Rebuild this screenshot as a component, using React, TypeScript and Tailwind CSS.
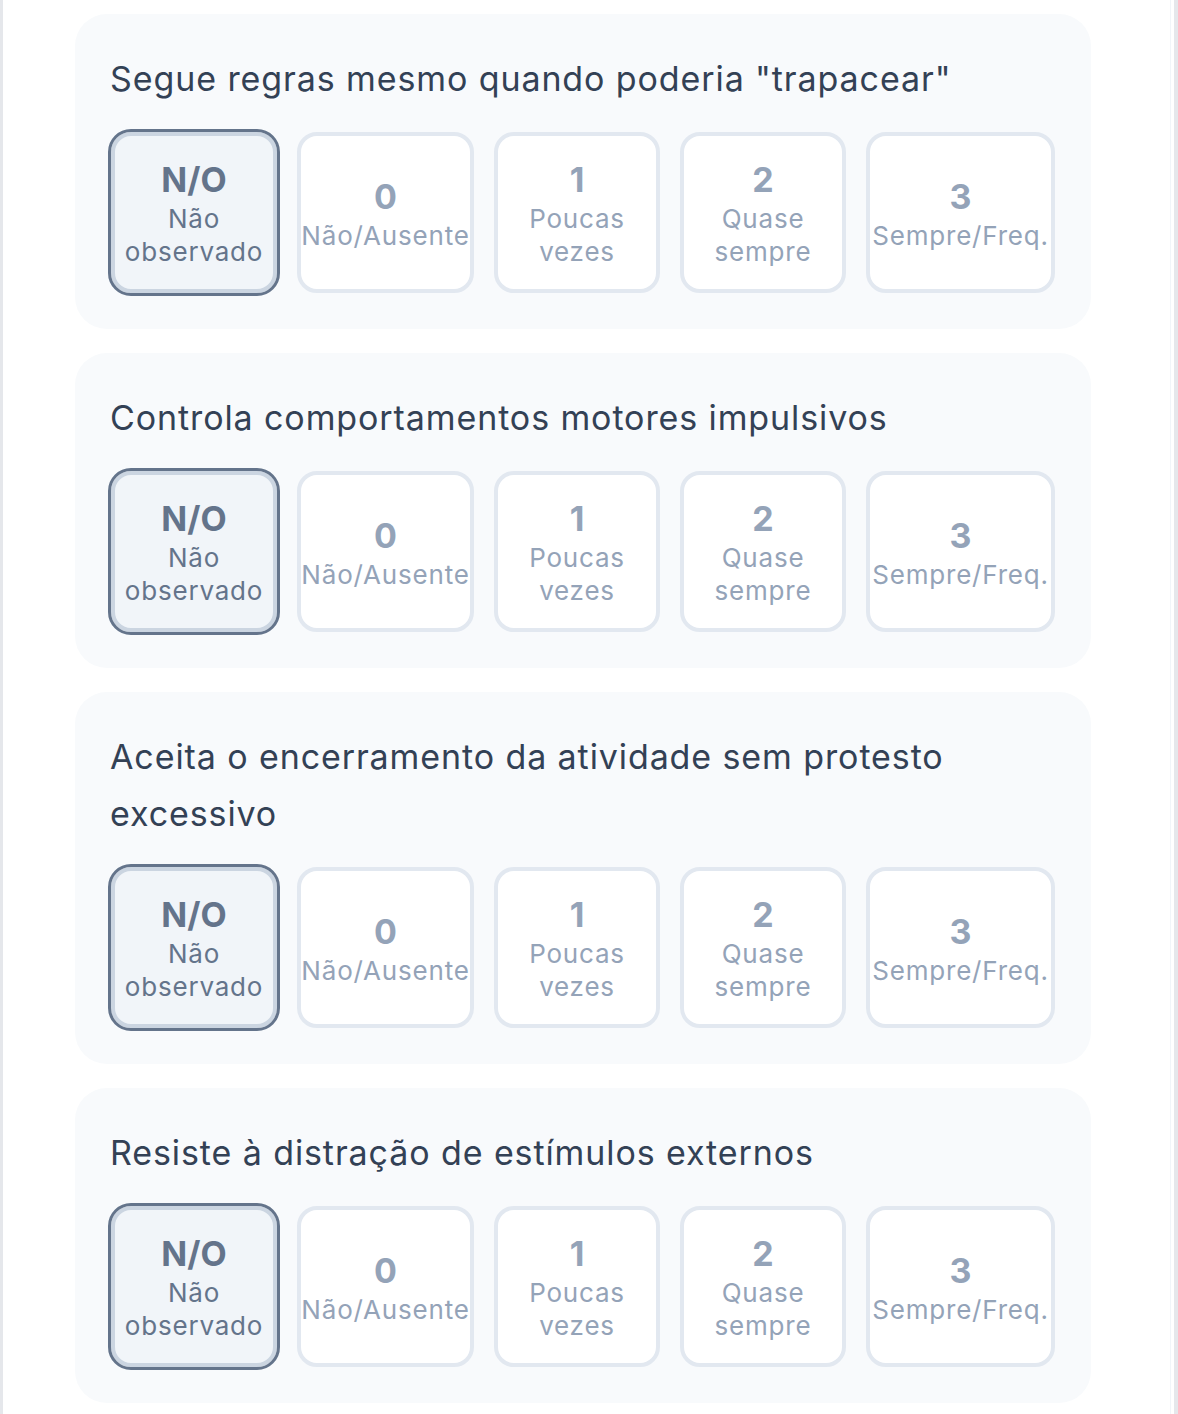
import React from "react";

type Opt = { n: string; label: string[]; w: string };

const options: Opt[] = [
  { n: "N/O", label: ["Não", "observado"], w: "w-[166px]" },
  { n: "0", label: ["Não/Ausente"], w: "w-[177px]" },
  { n: "1", label: ["Poucas", "vezes"], w: "w-[166px]" },
  { n: "2", label: ["Quase", "sempre"], w: "w-[166px]" },
  { n: "3", label: ["Sempre/Freq."], w: "w-[189px]" },
];

const questions: string[][] = [
  ['Segue regras mesmo quando poderia "trapacear"'],
  ["Controla comportamentos motores impulsivos"],
  ["Aceita o encerramento da atividade sem protesto", "excessivo"],
  ["Resiste à distração de estímulos externos"],
];

function OptionButton({ o, selected }: { o: Opt; selected: boolean }) {
  return (
    <div
      className={
        "flex h-[161px] shrink-0 flex-col items-center justify-center rounded-[20px] border-[4px] " +
        o.w +
        (selected
          ? " border-[#cbd5e1] bg-[#f1f5f9] outline outline-[3px] outline-[#64748b]"
          : " border-[#e2e8f0] bg-white")
      }
    >
      <div
        className={
          "text-[34px] font-bold leading-[45px] " +
          (selected ? "text-[#64748b]" : "text-[#94a3b8]")
        }
      >
        {o.n}
      </div>
      {o.label.map((l) => (
        <div
          key={l}
          className={
            "whitespace-nowrap text-[26px] leading-[33px] tracking-[0.8px] " +
            (selected ? "text-[#64748b]" : "text-[#94a3b8]")
          }
        >
          {l}
        </div>
      ))}
    </div>
  );
}

function Card({ title }: { title: string[] }) {
  return (
    <div className="w-[1016px] rounded-[32px] bg-[#f8fafc] px-[36px] pb-[36px] pt-[36px]">
      <div className="mb-[25px] text-[34px] leading-[57px] tracking-[0.9px] text-[#334155]">
        {title.map((t) => (
          <div key={t} className="-ml-[1px]">{t}</div>
        ))}
      </div>
      <div className="flex gap-[20px]">
        {options.map((o, i) => (
          <OptionButton key={o.n} o={o} selected={i === 0} />
        ))}
      </div>
    </div>
  );
}

export default function App() {
  return (
    <div
      className="flex h-[1414px] w-[1178px] overflow-hidden bg-white"
      style={{ fontFamily: "Inter, 'Noto Sans', sans-serif" }}
    >
      <div className="w-[3px] shrink-0 bg-[#e5e7eb]" />
      <div className="flex flex-1 flex-col gap-[24px] pl-[72px] pt-[14px]">
        {questions.map((q) => (
          <Card key={q[0]} title={q} />
        ))}
      </div>
      <div className="w-[1px] shrink-0 bg-[#f1f5f9]" />
      <div className="w-[3px] shrink-0" />
      <div className="w-[4px] shrink-0 bg-[#e5e7eb]" />
    </div>
  );
}
